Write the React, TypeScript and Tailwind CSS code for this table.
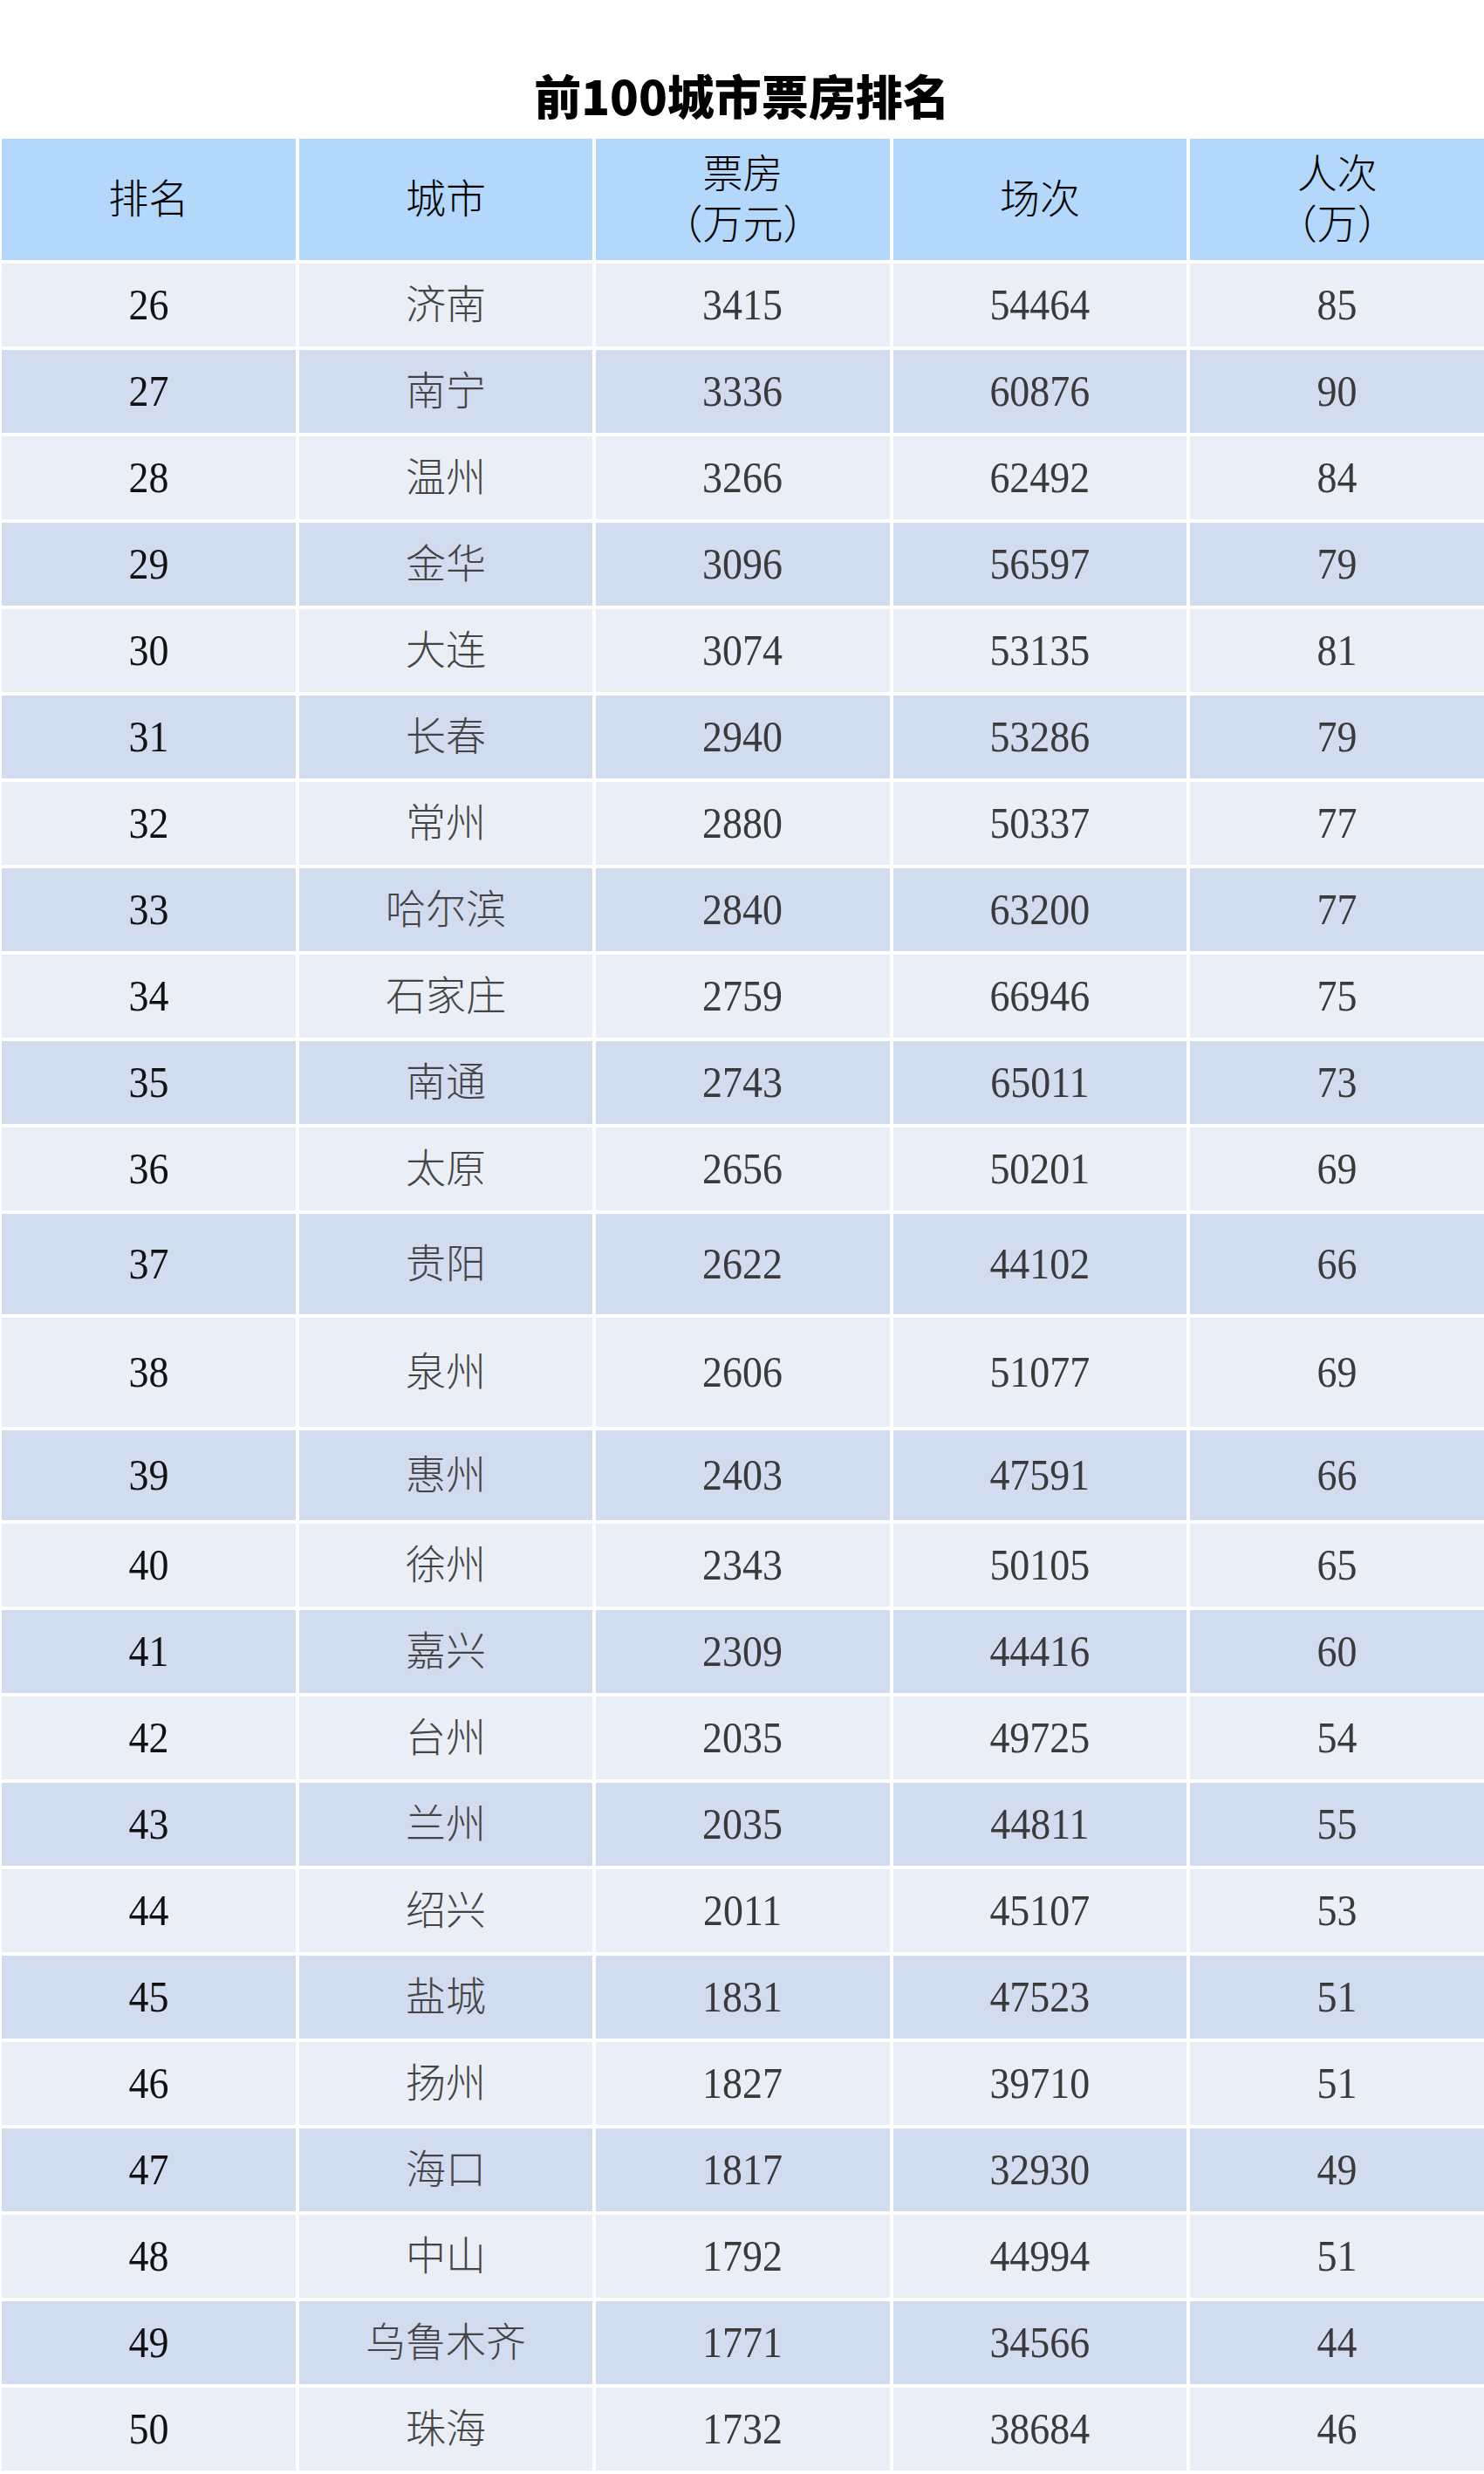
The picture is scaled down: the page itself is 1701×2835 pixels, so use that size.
import React from "react";

type Row = [number, string, number, number, number];

const rows: Row[] = [
  [26, "济南", 3415, 54464, 85],
  [27, "南宁", 3336, 60876, 90],
  [28, "温州", 3266, 62492, 84],
  [29, "金华", 3096, 56597, 79],
  [30, "大连", 3074, 53135, 81],
  [31, "长春", 2940, 53286, 79],
  [32, "常州", 2880, 50337, 77],
  [33, "哈尔滨", 2840, 63200, 77],
  [34, "石家庄", 2759, 66946, 75],
  [35, "南通", 2743, 65011, 73],
  [36, "太原", 2656, 50201, 69],
  [37, "贵阳", 2622, 44102, 66],
  [38, "泉州", 2606, 51077, 69],
  [39, "惠州", 2403, 47591, 66],
  [40, "徐州", 2343, 50105, 65],
  [41, "嘉兴", 2309, 44416, 60],
  [42, "台州", 2035, 49725, 54],
  [43, "兰州", 2035, 44811, 55],
  [44, "绍兴", 2011, 45107, 53],
  [45, "盐城", 1831, 47523, 51],
  [46, "扬州", 1827, 39710, 51],
  [47, "海口", 1817, 32930, 49],
  [48, "中山", 1792, 44994, 51],
  [49, "乌鲁木齐", 1771, 34566, 44],
  [50, "珠海", 1732, 38684, 46],
];

const heightClass: Record<number, string> = {
  37: "h-[115px]",
  38: "h-[125px]",
  39: "h-[103px]",
};

const serif = { fontFamily: '"Liberation Serif", "Noto Sans CJK SC", serif' };

function Num({ v, dark }: { v: number | string; dark?: boolean }) {
  return (
    <span
      className={`inline-block scale-x-[0.9] text-[51px] leading-none ${dark ? "text-[#111111]" : "text-[#3a3a3a]"}`}
    >
      {v}
    </span>
  );
}

export default function App() {
  return (
    <div className="w-[1701px] bg-white pb-[4px]" style={serif}>
      <div className="flex h-[155px] justify-center pt-[82px]">
        <h1
          className="text-[54px] font-black leading-[54px] text-black"
          style={{ fontFamily: '"Noto Sans CJK SC", "Noto Sans", sans-serif' }}
        >
          前100城市票房排名
        </h1>
      </div>
      <div className="mt-[4px] grid grid-cols-5 gap-[4px] pl-[2px]">
        {["排名", "城市", "票房\n（万元）", "场次", "人次\n（万）"].map((h) => (
          <div
            key={h}
            className="flex h-[139px] flex-col items-center justify-center bg-[#b3d8fb] text-[46px] font-light leading-[58px] text-black"
          >
            {h.split("\n").map((l) => (
              <span key={l}>{l}</span>
            ))}
          </div>
        ))}
        {rows.map((r, i) => {
          const bg = i % 2 === 0 ? "bg-[#e9eef7]" : "bg-[#d1ddef]";
          const h = heightClass[r[0]] ?? "h-[95px]";
          const cell = `flex items-center justify-center ${h} ${bg}`;
          return (
            <React.Fragment key={r[0]}>
              <div className={cell}>
                <Num v={r[0]} dark />
              </div>
              <div className={cell}>
                <span className="text-[46px] font-light leading-none text-[#444444]">{r[1]}</span>
              </div>
              <div className={cell}>
                <Num v={r[2]} />
              </div>
              <div className={cell}>
                <Num v={r[3]} />
              </div>
              <div className={cell}>
                <Num v={r[4]} />
              </div>
            </React.Fragment>
          );
        })}
      </div>
    </div>
  );
}
